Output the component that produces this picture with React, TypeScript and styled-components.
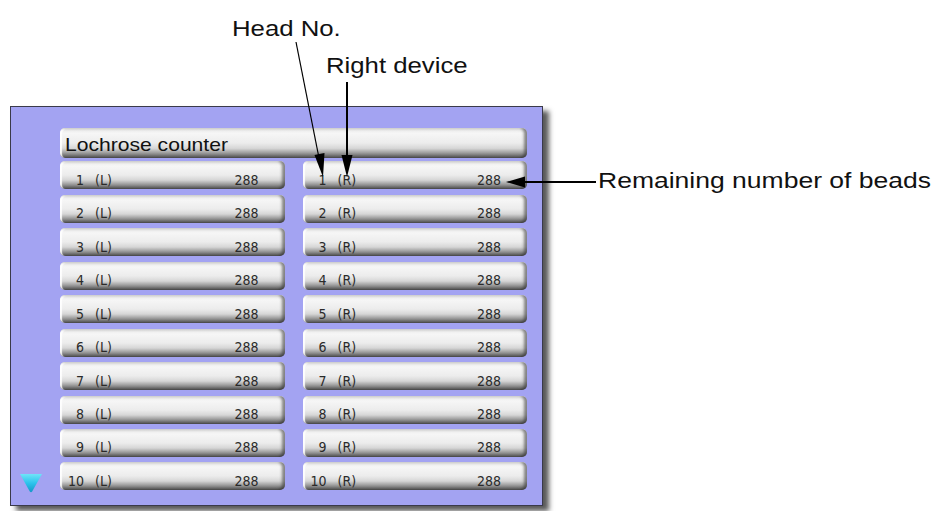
import React from 'react';
import styled, { createGlobalStyle } from 'styled-components';

const GlobalStyle = createGlobalStyle`
  html, body {
    margin: 0;
    padding: 0;
    background: #ffffff;
  }
  body {
    font-family: 'Liberation Sans', Arial, sans-serif;
  }
`;

const StyledStage = styled.div`
  position: relative;
  width: 936px;
  height: 511px;
  overflow: hidden;
  padding: 106px 0 0 10px;
  box-sizing: border-box;
  background: #ffffff;
`;

const StyledPanel = styled.div`
  width: 533px;
  height: 400px;
  box-sizing: border-box;
  display: flex;
  border: 1px solid #3a3a4a;
  background-color: #a3a3f2;
  box-shadow: 6px 5px 5px rgba(0, 0, 0, 0.65);
  padding: 21px 15px 11px 0;
`;

const StyledGutter = styled.div`
  width: 49px;
  flex: none;
  display: flex;
  align-items: flex-end;
  padding-left: 9px;
  padding-bottom: 1px;
  box-sizing: border-box;
`;

const StyledGrid = styled.div`
  flex: 1;
  display: grid;
  grid-template-columns: 1fr 1fr;
  grid-auto-rows: 28px;
  column-gap: 18px;
  row-gap: 5.44px;
`;

const StyledRaised = styled.div`
  box-sizing: border-box;
  border-radius: 5px;
  background: linear-gradient(
    to bottom,
    #e6e6e6 0%,
    #f6f6f6 18%,
    #ececec 50%,
    #d6d6d6 68%,
    #a0a0a0 82%,
    #505050 100%
  );
  box-shadow: inset -3px 0 3px rgba(40, 40, 40, 0.55),
    inset 2px 1px 1px rgba(255, 255, 255, 0.9);
`;

const StyledHeader = styled(StyledRaised)`
  grid-column: 1 / span 2;
  height: 30px;
  margin-bottom: 1.5px;
  display: flex;
  align-items: center;
  padding: 4px 0 0 5px;
  font-family: 'Liberation Sans', Arial, sans-serif;
  font-size: 19px;
  color: #111111;
`;

const StyledWide = styled.span<{ $stretch: number }>`
  display: inline-block;
  transform: scaleX(${p => p.$stretch});
  transform-origin: left center;
`;

const StyledCounter = styled(StyledRaised)`
  display: flex;
  align-items: center;
  padding: 9px 26px 0 0;
  font-family: 'Liberation Sans Narrow', 'DejaVu Sans Condensed', 'Liberation Sans', sans-serif;
  font-size: 14px;
  color: #2a2a2a;
`;

const StyledHeadNo = styled.span`
  width: 24px;
  text-align: right;
`;

const StyledSide = styled.span`
  margin-left: 11px;
`;

const StyledCount = styled.span`
  margin-left: auto;
`;

const StyledCallout = styled.span<{ $x: number; $y: number; $stretch: number }>`
  position: absolute;
  left: ${p => p.$x}px;
  top: ${p => p.$y}px;
  font-family: 'Liberation Sans', Arial, sans-serif;
  font-size: 22px;
  line-height: 22px;
  color: #111111;
  white-space: nowrap;
  transform: scaleX(${p => p.$stretch});
  transform-origin: left top;
`;

const StyledOverlay = styled.svg`
  position: absolute;
  left: 0;
  top: 0;
  pointer-events: none;
`;

const DownTriangle = () => (
  <svg width='22' height='20' viewBox='0 0 22 20'>
    <defs>
      <linearGradient id='tri' x1='0' y1='0' x2='0' y2='1'>
        <stop offset='0' stopColor='#6fe4f8' />
        <stop offset='0.5' stopColor='#2cc3ec' />
        <stop offset='1' stopColor='#1496c8' />
      </linearGradient>
    </defs>
    <path d='M0 1 L22 1 L12.2 18.6 Q11 20 9.8 18.6 Z' fill='url(#tri)' />
  </svg>
);

const heads = Array.from({ length: 10 }, (_, i) => i + 1);

const Counter: React.FC<{ head: number; side: string; count: number }> = props => (
  <StyledCounter>
    <StyledHeadNo>{props.head}</StyledHeadNo>
    <StyledSide>({props.side})</StyledSide>
    <StyledCount>{props.count}</StyledCount>
  </StyledCounter>
);

const App: React.FC = () => {
  return (
    <StyledStage>
      <GlobalStyle />
      <StyledPanel>
        <StyledGutter>
          <DownTriangle />
        </StyledGutter>
        <StyledGrid>
          <StyledHeader>
            <StyledWide $stretch={1.11}>Lochrose counter</StyledWide>
          </StyledHeader>
          {heads.map(h => (
            <React.Fragment key={h}>
              <Counter head={h} side='L' count={288} />
              <Counter head={h} side='R' count={288} />
            </React.Fragment>
          ))}
        </StyledGrid>
      </StyledPanel>

      <StyledCallout $x={232} $y={18} $stretch={1.17}>Head No.</StyledCallout>
      <StyledCallout $x={326} $y={55} $stretch={1.17}>Right device</StyledCallout>
      <StyledCallout $x={598} $y={170} $stretch={1.205}>Remaining number of beads</StyledCallout>

      <StyledOverlay width='936' height='511'>
        <line x1='296' y1='42' x2='319' y2='158' stroke='#000' strokeWidth='1.2' />
        <polygon points='323,177 314.5,155 324.5,153' fill='#000' />
        <line x1='347' y1='82' x2='347' y2='158' stroke='#000' strokeWidth='2' />
        <polygon points='347,177 341.5,155 352.5,155' fill='#000' />
        <line x1='522' y1='182' x2='596' y2='182' stroke='#000' strokeWidth='2' />
        <polygon points='506,182 525,176.5 525,187.5' fill='#000' />
      </StyledOverlay>
    </StyledStage>
  );
};

export default App;
